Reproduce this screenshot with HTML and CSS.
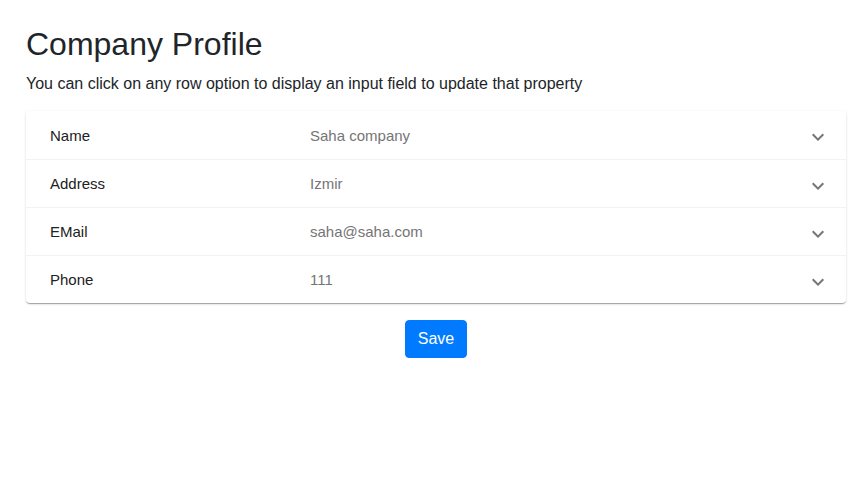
FILE: index.html
```html
<!DOCTYPE html>
<html>
<head>
<meta charset="utf-8">
<link rel="stylesheet" href="styles.css">
</head>
<body>
<div class="page">
  <h1 class="title">Company Profile</h1>
  <p class="lead">You can click on any row option to display an input field to update that property</p>
  <div class="card">
    <div class="row">
      <span class="label">Name</span>
      <span class="value">Saha company</span>
      <span class="expand"><svg viewBox="0 0 24 24" width="24" height="24"><path d="M16.59 8.59L12 13.17 7.41 8.59 6 10l6 6 6-6z"/></svg></span>
    </div>
    <div class="row">
      <span class="label">Address</span>
      <span class="value">Izmir</span>
      <span class="expand"><svg viewBox="0 0 24 24" width="24" height="24"><path d="M16.59 8.59L12 13.17 7.41 8.59 6 10l6 6 6-6z"/></svg></span>
    </div>
    <div class="row">
      <span class="label">EMail</span>
      <span class="value">saha@saha.com</span>
      <span class="expand"><svg viewBox="0 0 24 24" width="24" height="24"><path d="M16.59 8.59L12 13.17 7.41 8.59 6 10l6 6 6-6z"/></svg></span>
    </div>
    <div class="row">
      <span class="label">Phone</span>
      <span class="value">111</span>
      <span class="expand"><svg viewBox="0 0 24 24" width="24" height="24"><path d="M16.59 8.59L12 13.17 7.41 8.59 6 10l6 6 6-6z"/></svg></span>
    </div>
  </div>
  <div class="actions">
    <button class="btn">Save</button>
  </div>
</div>
</body>
</html>
```

FILE: styles.css
```css
* { box-sizing: border-box; }
html, body { margin: 0; padding: 0; background: #fff; }
body {
  font-family: "Liberation Sans", Arial, sans-serif;
  color: #212529;
}
.page {
  width: 820px;
  margin-left: 26px;
  padding-top: 25px;
}
.title {
  margin: 0 0 9px 0;
  font-size: 32px;
  font-weight: 400;
  line-height: 1.2;
  color: #212529;
}
.lead {
  margin: 0 0 15px 0;
  font-size: 16px;
  line-height: 24px;
  color: #212529;
}
.card {
  background: #fff;
  border-radius: 4px;
  box-shadow: 0px 2px 1px -1px rgba(0,0,0,0.2), 0px 1px 1px 0px rgba(0,0,0,0.14), 0px 1px 3px 0px rgba(0,0,0,0.12);
}
.row {
  display: flex;
  align-items: center;
  height: 48px;
  padding: 0 4px 0 24px;
  font-size: 15px;
  border-top: 1px solid rgba(0,0,0,0.05);
}
.row:first-child { border-top: none; }
.label {
  width: 260px;
  color: #212121;
}
.value {
  flex: 1;
  color: #757575;
}
.expand {
  width: 48px;
  height: 48px;
  display: flex;
  align-items: center;
  justify-content: center;
  padding-top: 4px;
}
.expand svg { fill: #757575; }
.actions {
  display: flex;
  justify-content: center;
  margin-top: 17px;
}
.btn {
  font-family: "Liberation Sans", Arial, sans-serif;
  font-size: 16px;
  line-height: 24px;
  padding: 6px 12px;
  color: #fff;
  background: #007bff;
  border: 1px solid #007bff;
  border-radius: 4px;
  cursor: pointer;
}
```
